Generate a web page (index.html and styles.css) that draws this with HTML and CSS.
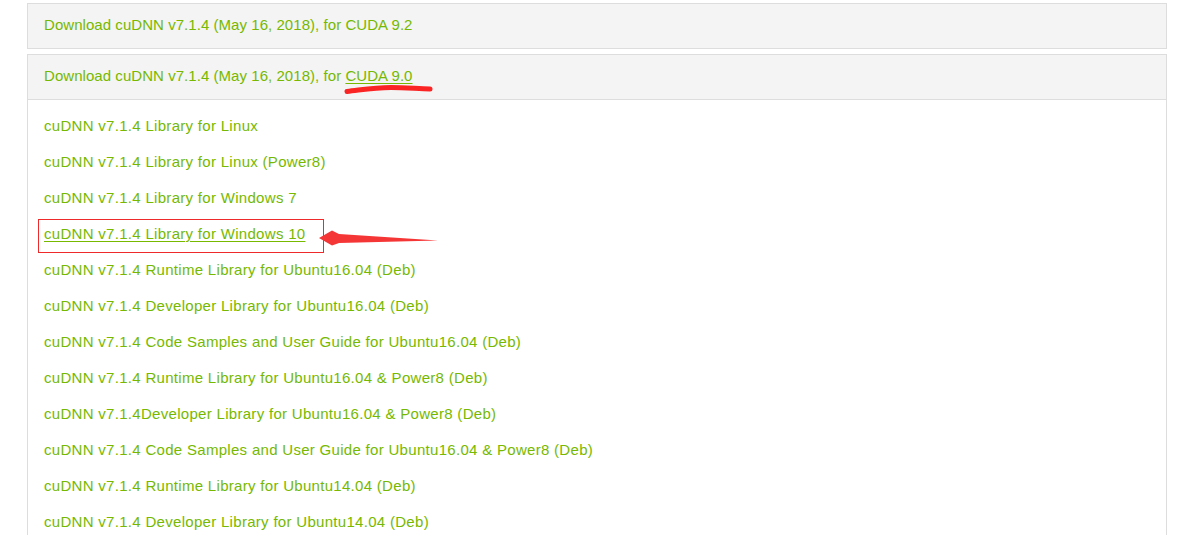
FILE: index.html
```html
<!DOCTYPE html>
<html>
<head>
<meta charset="utf-8">
<link rel="stylesheet" href="styles.css">
</head>
<body>
<div class="page">
  <div class="panel">
    <div class="panel-head"><a class="link" href="#">Download cuDNN v7.1.4 (May 16, 2018), for CUDA 9.2</a></div>
  </div>
  <div class="panel open">
    <div class="panel-head"><a class="link" href="#">Download cuDNN v7.1.4 (May 16, 2018), for <span class="hover">CUDA 9.0</span></a>
      <svg class="scribble" width="100" height="14" viewBox="0 0 100 14"><path d="M6 9.5 C 20 8, 32 5.5, 50 5.5 C 66 5.5, 78 7, 89 7" stroke="#fa2424" stroke-width="5" fill="none" stroke-linecap="round"/></svg>
    </div>
    <div class="panel-body">
      <a class="row" href="#">cuDNN v7.1.4 Library for Linux</a>
      <a class="row" href="#">cuDNN v7.1.4 Library for Linux (Power8)</a>
      <a class="row" href="#">cuDNN v7.1.4 Library for Windows 7</a>
      <div class="row marked"><a class="link underline" href="#">cuDNN v7.1.4 Library for Windows 10</a>
        <svg class="arrow" width="130" height="20" viewBox="0 0 130 20"><polygon points="1,9 14,1.5 21,5 120,11.5 21,14 14,16.5" fill="#f53636"/></svg>
      </div>
      <a class="row" href="#">cuDNN v7.1.4 Runtime Library for Ubuntu16.04 (Deb)</a>
      <a class="row" href="#">cuDNN v7.1.4 Developer Library for Ubuntu16.04 (Deb)</a>
      <a class="row" href="#">cuDNN v7.1.4 Code Samples and User Guide for Ubuntu16.04 (Deb)</a>
      <a class="row" href="#">cuDNN v7.1.4 Runtime Library for Ubuntu16.04 &amp; Power8 (Deb)</a>
      <a class="row" href="#">cuDNN v7.1.4Developer Library for Ubuntu16.04 &amp; Power8 (Deb)</a>
      <a class="row" href="#">cuDNN v7.1.4 Code Samples and User Guide for Ubuntu16.04 &amp; Power8 (Deb)</a>
      <a class="row" href="#">cuDNN v7.1.4 Runtime Library for Ubuntu14.04 (Deb)</a>
      <a class="row" href="#">cuDNN v7.1.4 Developer Library for Ubuntu14.04 (Deb)</a>
    </div>
  </div>
</div>
</body>
</html>
```
FILE: styles.css
```css
html, body {
  margin: 0;
  padding: 0;
  background: #ffffff;
}
body {
  font-family: "Liberation Sans", Arial, sans-serif;
  font-size: 15px;
  letter-spacing: 0.3px;
  color: #76b900;
  overflow: hidden;
  height: 535px;
}
.page {
  padding: 3px 0 0 27px;
  width: 1140px;
  display: flex;
  flex-direction: column;
  gap: 5px;
}
.panel {
  border: 1px solid #dddddd;
  background: #f4f4f4;
}
.panel.open {
  background: #ffffff;
  border-bottom: none;
}
.panel-head {
  height: 41px;
  padding: 0 0 3px 16px;
  display: flex;
  align-items: center;
  background: #f4f4f4;
  position: relative;
  letter-spacing: 0.05px;
}
.panel.open .panel-head {
  border-bottom: 1px solid #dddddd;
}
.link {
  color: #76b900;
  text-decoration: none;
}
.hover {
  text-decoration: underline;
  text-underline-offset: 2px;
}
.scribble {
  position: absolute;
  left: 313px;
  top: 27px;
}
.panel-body {
  padding: 8px 0 0 16px;
  display: flex;
  flex-direction: column;
}
.row {
  height: 36px;
  line-height: 36px;
  color: #76b900;
  text-decoration: none;
  display: block;
  white-space: nowrap;
}
.row.marked {
  position: relative;
}
.row.marked::before {
  content: "";
  position: absolute;
  left: -6px;
  top: 3px;
  width: 284px;
  height: 32px;
  border: 1px solid #ee2a2a;
}
.underline {
  text-decoration: underline;
  text-underline-offset: 2px;
}
.arrow {
  position: absolute;
  left: 274px;
  top: 13px;
}
```
